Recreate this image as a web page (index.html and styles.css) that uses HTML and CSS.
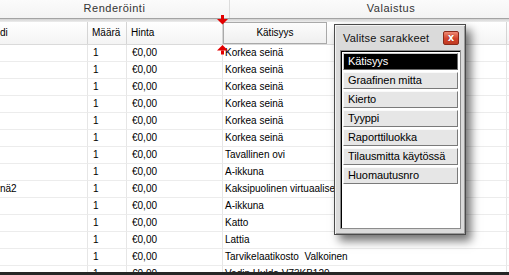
FILE: index.html
```html
<!DOCTYPE html>
<html lang="fi">
<head>
    <meta charset="UTF-8">
    <title>Tuotelista - Valitse sarakkeet</title>
    <link rel="stylesheet" href="styles.css">
</head>
<body>
<div class="screen">

    <div class="topbar">
        <div class="group group-render">Renderöinti</div>
        <div class="group group-light">Valaistus</div>
    </div>
    <div class="topline"></div>

    <div class="head">
        <div class="hcell hname">di</div>
        <div class="hcell">Määrä</div>
        <div class="hcell">Hinta</div>
        <div class="hcell hdrag">Kätisyys</div>
        <div class="hcell"></div>
        <div class="hcell hlast"></div>
    </div>

    <div class="rows" id="rows"></div>

    <div class="bottombar"></div>

    <!-- drop marker for the dragged column -->
    <svg class="marker marker-down" width="11" height="10" viewBox="0 0 11 10">
        <rect x="4" y="0" width="3" height="4" fill="#e30000"/>
        <polygon points="0,4 11,4 5.5,9.5" fill="#e30000"/>
    </svg>
    <svg class="marker marker-up" width="11" height="10" viewBox="0 0 11 10">
        <polygon points="5.5,0 11,5.5 0,5.5" fill="#e30000"/>
        <rect x="4" y="5.5" width="3" height="4" fill="#e30000"/>
    </svg>

    <div class="chooser">
        <div class="chooser-title">
            <span>Valitse sarakkeet</span>
            <button class="close-btn">x</button>
        </div>
        <div class="chooser-list">
            <div class="col-item selected">Kätisyys</div>
            <div class="col-item">Graafinen mitta</div>
            <div class="col-item">Kierto</div>
            <div class="col-item">Tyyppi</div>
            <div class="col-item">Raporttiluokka</div>
            <div class="col-item">Tilausmitta käytössä</div>
            <div class="col-item">Huomautusnro</div>
        </div>
    </div>

</div>

<script>
    let products = [
        ['', 'Korkea seinä'],
        ['', 'Korkea seinä'],
        ['', 'Korkea seinä'],
        ['', 'Korkea seinä'],
        ['', 'Korkea seinä'],
        ['', 'Korkea seinä'],
        ['', 'Tavallinen ovi'],
        ['', 'A-ikkuna'],
        ['nä2', 'Kaksipuolinen virtuaaliseinä'],
        ['', 'A-ikkuna'],
        ['', 'Katto'],
        ['', 'Lattia'],
        ['', 'Tarvikelaatikosto  Valkoinen'],
        ['', 'Vedin Hulda V73KB120']
    ];

    let rows = document.getElementById('rows');

    products.forEach((p) => {
        let row = document.createElement('div');
        row.className = 'row';
        row.innerHTML =
            '<div class="cell cname">' + p[0] + '</div>' +
            '<div class="cell cqty">1</div>' +
            '<div class="cell cprice">€0,00</div>' +
            '<div class="cell chand">' + p[1] + '</div>' +
            '<div class="cell clast"></div>';
        rows.appendChild(row);
    });
</script>
</body>
</html>
```

FILE: styles.css
```css
* {
    margin: 0;
    padding: 0;
    box-sizing: border-box;
}

body {
    width: 509px;
    height: 275px;
    overflow: hidden;
    background-color: #fff;
    font-family: "Liberation Sans", Arial, sans-serif;
    font-size: 10px;
    color: #000;
}

.screen {
    position: relative;
    width: 509px;
    height: 275px;
    display: flex;
    flex-direction: column;
    overflow: hidden;
}

/* ribbon tabs on top */
.topbar {
    height: 19px;
    display: flex;
    background: linear-gradient(#fbfbfb, #f3f3f3);
    border-bottom: 1px solid #a3a3a3;
    flex-shrink: 0;
}

.group {
    font-size: 11px;
    letter-spacing: 0.5px;
    color: #333;
    text-align: center;
    line-height: 16px;
    flex-shrink: 0;
}

.group-render {
    width: 230px;
    border-right: 1px solid #dcdcdc;
}

.group-light {
    width: 322px;
}

.topline {
    height: 3px;
    background: linear-gradient(#d2d2d2, #ededed);
    flex-shrink: 0;
}

/* column headers */
.head {
    height: 23px;
    display: grid;
    grid-template-columns: 88px 39px 96px 104px 180px 1fr;
    background: linear-gradient(#ffffff, #f4f4f4);
    border-bottom: 1px solid #dadada;
    flex-shrink: 0;
}

.hcell {
    border-right: 1px solid #d5d5d5;
    line-height: 22px;
    padding-left: 4px;
    white-space: nowrap;
    overflow: hidden;
}

.hcell.hname {
    padding-left: 0;
}

.hcell.hdrag {
    padding-left: 0;
    text-align: center;
    border: 1px solid #a9a9a9;
    background: linear-gradient(#fcfcfc, #efefef);
    line-height: 20px;
}

.hcell.hlast {
    border-right: none;
}

/* data rows */
.rows {
    flex: 1;
    overflow: hidden;
}

.row {
    height: 17px;
    display: grid;
    grid-template-columns: 88px 39px 96px 284px 1fr;
}

.cell {
    border-right: 1px solid #e6e6e6;
    border-bottom: 1px solid #ececec;
    line-height: 16px;
    padding-left: 5px;
    white-space: pre;
    overflow: visible;
}

.cell.cname {
    padding-left: 0;
    overflow: hidden;
}

.cell.chand {
    padding-left: 2px;
}

.cell.clast {
    border-right: none;
}

.bottombar {
    height: 3px;
    background-color: #262626;
    flex-shrink: 0;
}

/* red drop markers */
.marker {
    position: absolute;
    left: 217px;
}

.marker-down {
    top: 15px;
}

.marker-up {
    top: 45px;
}

/* column chooser dialog */
.chooser {
    position: absolute;
    left: 334px;
    top: 24px;
    width: 132px;
    height: 211px;
    background-color: #dadada;
    border: 1px solid #4a4a4a;
    box-shadow: inset 1px 1px 0 #f3f3f3, inset -1px -1px 0 #9a9a9a, 5px 6px 9px rgba(0, 0, 0, 0.55);
    padding: 0 4px 5px 5px;
    display: flex;
    flex-direction: column;
}

.chooser-title {
    height: 25px;
    display: flex;
    align-items: center;
    justify-content: space-between;
    padding-left: 3px;
    font-size: 11px;
    letter-spacing: 0.2px;
    color: #111;
}

.close-btn {
    width: 16px;
    height: 14px;
    margin-right: 2px;
    border: 1px solid #8a2a1a;
    border-radius: 2px;
    background: linear-gradient(#ef8a74, #d2432b 55%, #c13a22);
    color: #fff;
    font-family: "DejaVu Sans", sans-serif;
    font-weight: bold;
    font-size: 10px;
    line-height: 11px;
    text-shadow: 0 0 1px #7a1a0a;
}

.chooser-list {
    flex: 1;
    background-color: #fff;
    border: 1px solid #8c8c8c;
    box-shadow: inset 1px 1px 0 #000;
    padding: 2px 2px 0 2px;
    display: flex;
    flex-direction: column;
    gap: 2px;
}

.col-item {
    height: 17px;
    background-color: #e6e6e6;
    border: 1px solid;
    border-color: #fafafa #7a7a7a #7a7a7a #fafafa;
    padding-left: 4px;
    line-height: 15px;
    font-size: 11px;
    letter-spacing: -0.1px;
    white-space: nowrap;
}

.col-item.selected {
    background-color: #000;
    color: #fff;
    border-color: #c8c8c8 #6a6a6a #6a6a6a #c8c8c8;
}
```
